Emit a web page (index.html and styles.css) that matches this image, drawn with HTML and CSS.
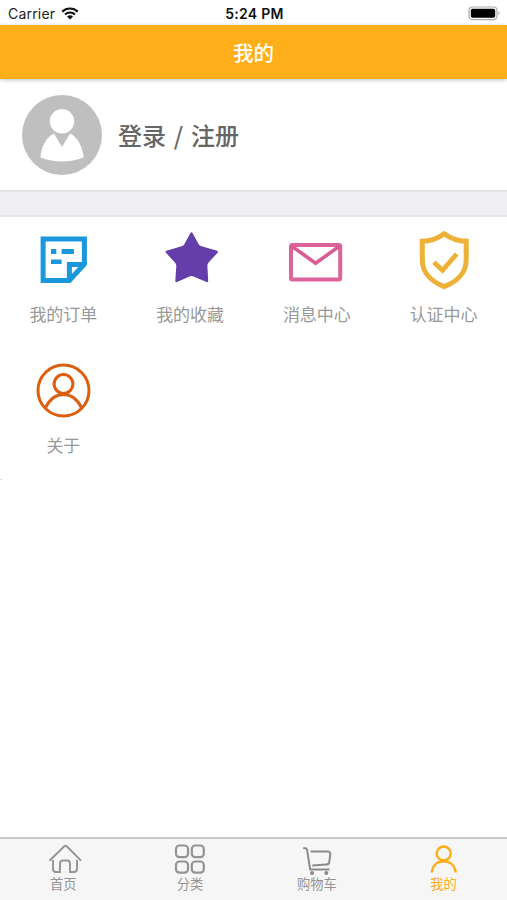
FILE: index.html
```
<!DOCTYPE html>
<html lang="zh-CN">
<head>
    <meta charset="UTF-8">
    <meta name="viewport" content="width=device-width, initial-scale=1.0">
    <title>我的</title>
    <link rel="stylesheet" href="styles.css">
</head>
<body>
    <div class="app">
        <div class="status-bar">
            <div class="carrier">
                <span>Carrier</span>
                <svg width="18" height="13" viewBox="0 0 18 13">
                    <path d="M1.2 4.6a11.3 11.3 0 0 1 15.6 0M4 7.5a7.2 7.2 0 0 1 10 0" fill="none" stroke="#111" stroke-width="2.2"/>
                    <path d="M9 12.6L6 9.6a4.3 4.3 0 0 1 6 0z" fill="#111"/>
                </svg>
            </div>
            <div class="time">5:24 PM</div>
            <div class="battery">
                <svg width="33" height="15" viewBox="0 0 33 15">
                    <rect x="1" y="1" width="28" height="12.6" rx="3.5" fill="none" stroke="#aaa" stroke-width="1.2"/>
                    <rect x="2.8" y="2.8" width="24.4" height="9" rx="1.8" fill="#000"/>
                    <path d="M30.6 5.2q2 2.1 0 4.2z" fill="#999"/>
                </svg>
            </div>
        </div>

        <header class="header"><h1>我的</h1></header>

        <section class="profile">
            <svg class="avatar" width="80" height="80" viewBox="0 0 80 80">
                <circle cx="40" cy="40" r="40" fill="#bfbfbf"/>
                <circle cx="40" cy="26.3" r="12.2" fill="#fff"/>
                <path d="M32 38.5L40 52l8-13.5C55.5 42 61 52 61.5 62.5Q51 66.5 40 66.5T18.500 62.5C19 52 24.500 42 32 38.5z" fill="#fff"/>
            </svg>
            <a class="login">登录 / 注册</a>
        </section>

        <div class="divider"></div>

        <main class="menu">
            <div class="menu-item">
                <svg width="64" height="64" viewBox="0 0 64 64">
                    <path d="M12.1 11h41.300v25L38.400 52.500H12.100zM38.400 52V36.500h15" fill="none" stroke="#1b97db" stroke-width="5"/>
                    <path d="M20 21h5.300v5H20zM30.600 21h12.300v5H30.600zM20 31.500h10.600v4.500H20z" fill="#1b97db"/>
                </svg>
                <span>我的订单</span>
            </div>
            <div class="menu-item">
                <svg width="64" height="64" viewBox="0 0 64 64">
                    <path d="M33.500 5.500L39.500 16.500Q40.700 18.800 43.200 19.400L58.800 23.800 49.500 34Q48 36 48.200 38L49 53 36 47.300Q33.500 46.300 31 47.300L18.500 53 19.500 38Q19.600 36 18 34L8.700 23.800 24 19.400Q26.300 18.800 27.500 16.500z" fill="#643eaa" stroke="#643eaa" stroke-width="2.400" stroke-linejoin="round"/>
                </svg>
                <span>我的收藏</span>
            </div>
            <div class="menu-item">
                <svg width="64" height="64" viewBox="0 0 64 64">
                    <rect x="6" y="17" width="49.200" height="34.500" rx="1.500" fill="none" stroke="#dc649b" stroke-width="4"/>
                    <path d="M6.500 18l24.100 17.200L54.700 18" fill="none" stroke="#d85d94" stroke-width="3.600"/>
                </svg>
                <span>消息中心</span>
            </div>
            <div class="menu-item">
                <svg width="64" height="64" viewBox="0 0 64 64">
                    <path d="M32.200 5.800Q22 13.300 10.300 13.300V32C10.300 45 20 54 32.200 58.600 44.500 54 54.200 45 54.200 32V13.300Q42.500 13.300 32.200 5.800z" fill="none" stroke="#edb137" stroke-width="5"/>
                    <path d="M21.800 34.300l8.700 8L44.700 26" fill="none" stroke="#edb137" stroke-width="4.800"/>
                </svg>
                <span>认证中心</span>
            </div>
            <div class="menu-item">
                <svg width="64" height="64" viewBox="0 0 64 64">
                    <g fill="none" stroke="#dc5f0f" stroke-width="3">
                        <circle cx="32.500" cy="31.500" r="25.500"/>
                        <circle cx="32.500" cy="25" r="9.400"/>
                        <path d="M14.300 49C19 39.500 25 35.500 32.500 35.500S46 39.500 50.700 49"/>
                    </g>
                </svg>
                <span>关于</span>
            </div>
        </main>

        <nav class="tab-bar">
            <a class="tab">
                <svg width="36" height="32" viewBox="0 0 36 32">
                    <path d="M4.500 18.700L19 4.500Q20.500 3 22 4.500L36 18.700M8 18v9q0 3 3 3h4v-8.500q0-3 3-3h4q3 0 3 3V30h4q3 0 3-3v-9" fill="none" stroke="#949494" stroke-width="1.900"/>
                </svg>
                <span>首页</span>
            </a>
            <a class="tab">
                <svg width="36" height="32" viewBox="0 0 36 32">
                    <g fill="none" stroke="#949494" stroke-width="2.200">
                        <rect x="4" y="3.500" width="12" height="11.700" rx="3.500"/>
                        <rect x="19.800" y="3.500" width="12" height="11.700" rx="3.500"/>
                        <rect x="4" y="19.500" width="12" height="11.200" rx="3.500"/>
                        <rect x="19.800" y="19.500" width="12" height="11.200" rx="3.500"/>
                    </g>
                </svg>
                <span>分类</span>
            </a>
            <a class="tab">
                <svg width="36" height="32" viewBox="0 0 36 32">
                    <path d="M4.200 6.200h2.300q1.200 0 1.500 1.500L11.200 27.400h19.300M11.500 9.500h17q3 0 2.800 2.500l-1 8q-.4 2.500-3 2.600l-14 1" fill="none" stroke="#8b8b8b" stroke-width="2"/>
                    <circle cx="13" cy="31" r="2" fill="#8b8b8b"/>
                    <circle cx="27.300" cy="31" r="2" fill="#8b8b8b"/>
                </svg>
                <span>购物车</span>
            </a>
            <a class="tab active">
                <svg width="36" height="32" viewBox="0 0 36 32">
                    <circle cx="17.700" cy="11.500" r="7" fill="none" stroke="#fcad19" stroke-width="2.400"/>
                    <path d="M5.800 30.500C6.500 23 11.500 19.300 17.700 19.300S29 23 29.700 30.500" fill="none" stroke="#fcad19" stroke-width="2.400"/>
                </svg>
                <span>我的</span>
            </a>
        </nav>
    </div>
</body>
</html>
```
FILE: styles.css
```
/* styles.css */
* {
    margin: 0;
    padding: 0;
    box-sizing: border-box;
}

body {
    font-family: 'Noto Sans CJK SC', sans-serif;
    background-color: #fff;
    color: #999;
}

svg {
    display: block;
    flex-shrink: 0;
    overflow: visible;
}

.app {
    height: 100vh;
    display: flex;
    flex-direction: column;
    overflow: hidden;
}

/* Status bar */
.status-bar {
    height: 25px;
    padding: 2px 6px 0 8px;
    display: grid;
    grid-template-columns: 1fr auto 1fr;
    align-items: center;
    font-family: 'Inter', sans-serif;
    font-size: 14px;
    line-height: 20px;
    color: #222;
}

.carrier {
    display: flex;
    align-items: center;
    gap: 6px;
    letter-spacing: 0.2px;
}

.time {
    font-weight: 600;
    font-size: 14px;
    letter-spacing: 0.3px;
    color: #111;
}

.battery {
    justify-self: end;
}

/* Title bar */
.header {
    position: relative;
    height: 54px;
    background-color: #ffaf19;
    box-shadow: 0 1px 4px rgba(0, 0, 0, 0.25);
    display: flex;
    justify-content: center;
    align-items: center;
}

h1 {
    font-size: 20.5px;
    font-weight: 500;
    line-height: 30px;
    color: #fff;
}

.profile {
    height: 111px;
    padding: 0 22px;
    display: flex;
    align-items: center;
    gap: 16px;
}

.login {
    font-size: 24px;
    font-weight: 500;
    line-height: 36px;
    word-spacing: 2.4px;
    color: #666;
}

.divider {
    height: 27px;
    background-color: #efeff4;
    border-top: 2px solid #e4e4e6;
    border-bottom: 2px solid #e8e8ea;
}

/* Menu grid */
.menu {
    flex: 1;
    display: grid;
    grid-template-columns: repeat(4, 1fr);
    grid-auto-rows: 131px;
}

/* short rule at the left edge under the last row */
.menu::after {
    content: '';
    grid-row: 3;
    grid-column: 1;
    width: 2px;
    height: 1px;
    background-color: #ddd;
}

.menu-item {
    padding-top: 11px;
    display: flex;
    flex-direction: column;
    align-items: center;
    gap: 9px;
    font-size: 17px;
    line-height: 26px;
    color: #999;
}

/* Bottom tabs */
.tab-bar {
    height: 63px;
    padding-top: 3px;
    display: grid;
    grid-template-columns: repeat(4, 1fr);
    background-color: #f6f6f6;
    border-top: 2px solid #c9c9c9;
}

.tab {
    display: flex;
    flex-direction: column;
    align-items: center;
    font-size: 13.3px;
    line-height: 20px;
    color: #949494;
}

.active {
    color: #fcad19;
}
```
